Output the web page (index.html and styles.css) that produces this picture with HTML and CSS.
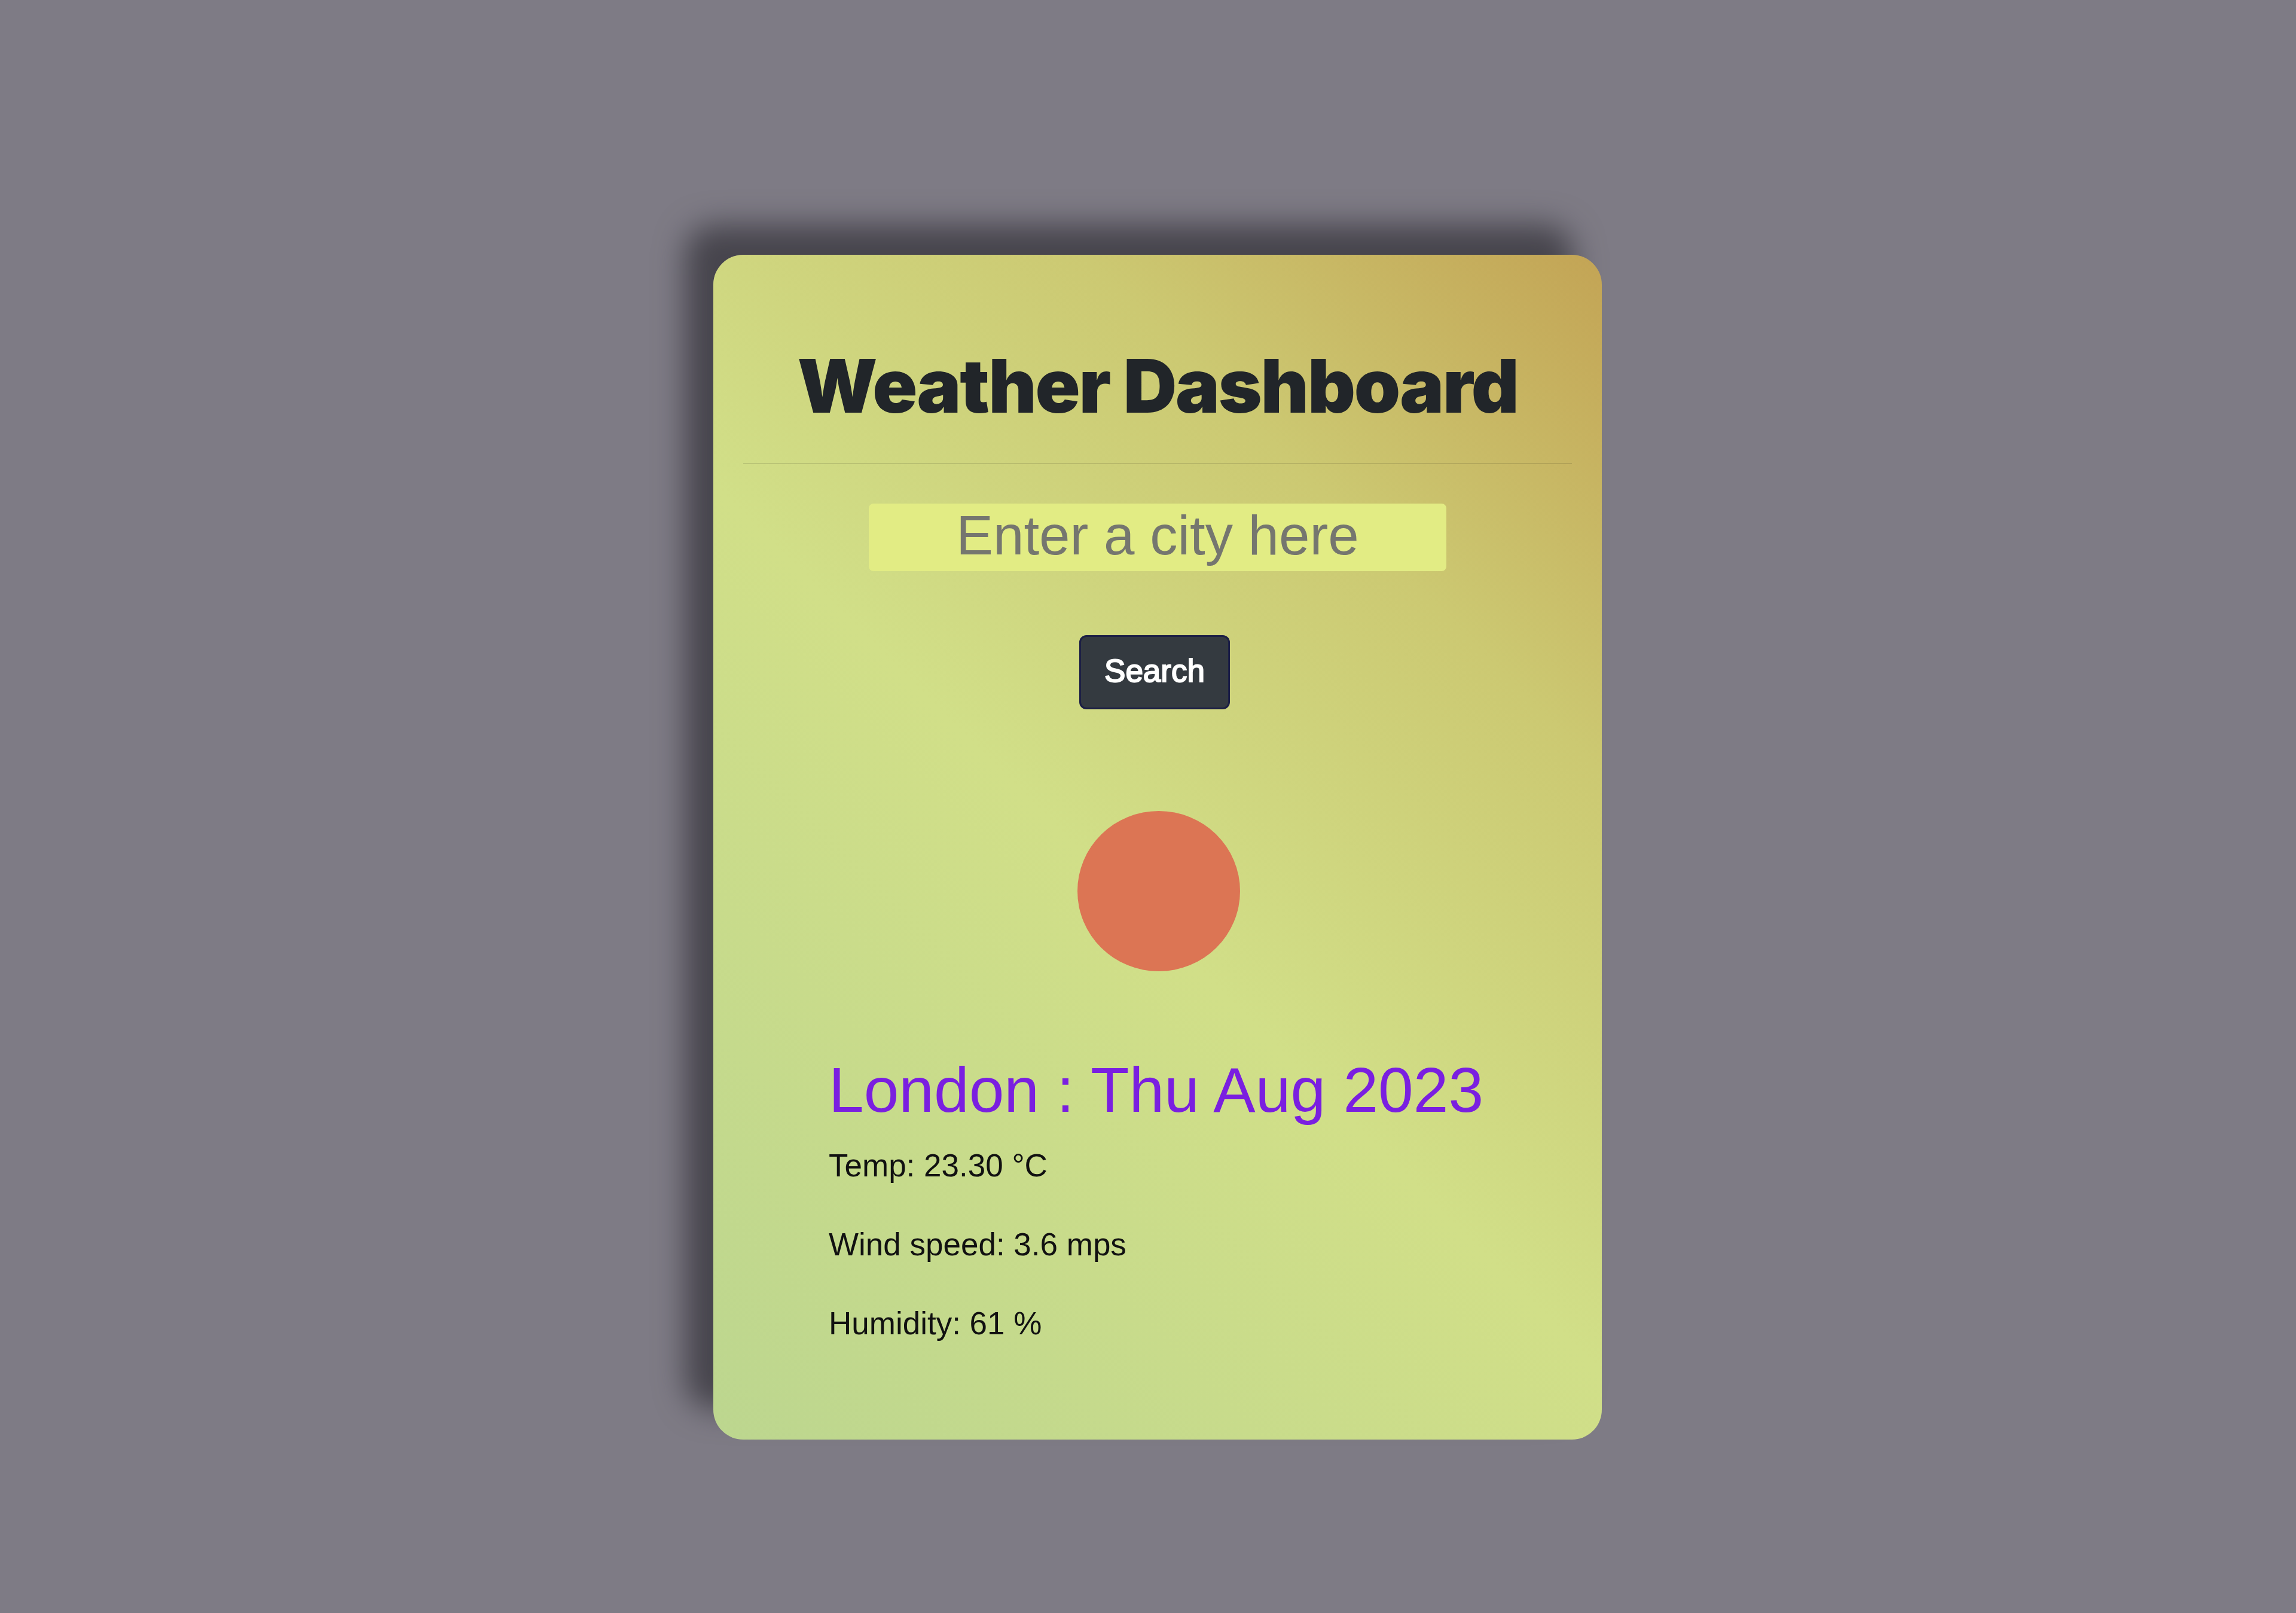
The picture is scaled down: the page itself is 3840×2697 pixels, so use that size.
FILE: index.html
```html
<!DOCTYPE html>
<html lang="en">
<head>
<meta charset="utf-8">
<title>Weather Dashboard</title>
<link rel="stylesheet" href="styles.css">
</head>
<body>
<main class="card">
  <h1 class="title">Weather Dashboard</h1>
  <hr class="rule">
  <form class="search">
    <input class="city" type="text" placeholder="Enter a city here">
    <button class="go" type="button">Search</button>
  </form>
  <div class="sun"></div>
  <section class="report">
    <h2 class="place">London : Thu Aug 2023</h2>
    <p class="stat">Temp: 23.30 °C</p>
    <p class="stat">Wind speed: 3.6 mps</p>
    <p class="stat">Humidity: 61 %</p>
  </section>
</main>
</body>
</html>
```
FILE: styles.css
```css
* { box-sizing: border-box; }
html, body { margin: 0; height: 100%; }
body {
  min-height: 2697px;
  background: #7e7b85;
  display: flex;
  justify-content: center;
  align-items: flex-start;
  padding-top: 426px;
  font-family: "Liberation Sans", Arial, sans-serif;
  color: #111;
}
.card {
  width: 1486px;
  height: 1981px;
  margin-left: 32px;
  padding: 0 50px;
  border-radius: 50px;
  background: linear-gradient(45deg, #bcd68f 0%, #d1df88 46%, #ccc972 75%, #c3a455 100%);
  box-shadow: -47px -50px 50px #47454d;
  display: flex;
  flex-direction: column;
  align-items: center;
}
.title {
  margin: 144px 0 0;
  font-family: Inter, sans-serif;
  font-weight: 900;
  font-size: 124px;
  line-height: 150px;
  letter-spacing: -2.2px;
  color: #212529;
  white-space: nowrap;
}
.rule {
  width: 100%;
  margin: 54px 0 0;
  border: 0;
  border-top: 2px solid rgba(0, 0, 0, 0.1);
}
.search {
  display: flex;
  flex-direction: column;
  align-items: center;
}
.city {
  width: 966px;
  height: 113px;
  margin-top: 66px;
  padding: 0 0 6px;
  border: 0;
  border-radius: 8px;
  background: #e2ec84;
  font: 92.5px "Liberation Sans", Arial, sans-serif;
  text-align: center;
  outline: none;
}
.city::placeholder { color: #75766f; opacity: 1; }
.go {
  width: 252px;
  height: 124px;
  margin-top: 107px;
  margin-left: -10px;
  padding: 0 0 6px;
  border: 3px solid #1c1f45;
  border-radius: 12px;
  background: #343a40;
  color: #fff;
  font: 53px "Liberation Sans", Arial, sans-serif;
  -webkit-text-stroke: 2px #fff;
}
.sun {
  width: 272px;
  height: 268px;
  margin-top: 170px;
  margin-left: 4px;
  flex: none;
  border-radius: 50%;
  background: #dc7554;
}
.report {
  width: 100%;
  padding-left: 143px;
}
.place {
  margin: 138px 0 0;
  font-weight: 400;
  font-size: 105.5px;
  line-height: 120px;
  color: #7a1fe0;
}
.stat {
  margin: 0;
  font-size: 53px;
  line-height: 62px;
  margin-top: 70px;
}
.place + .stat { margin-top: 36px; }
```
